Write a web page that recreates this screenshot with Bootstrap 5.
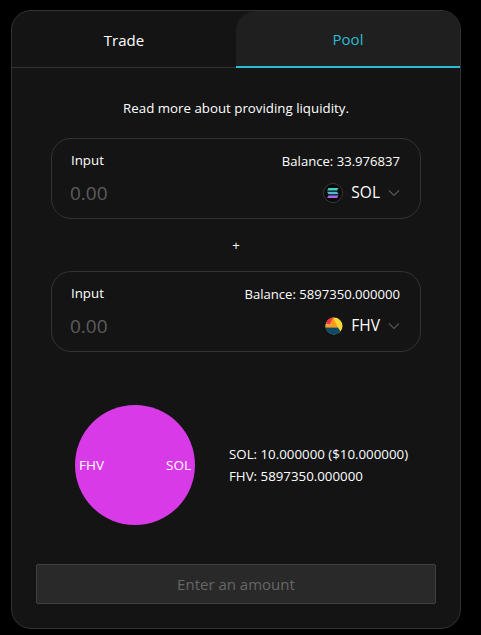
<!DOCTYPE html>
<html lang="en">
<head>
  <meta charset="UTF-8">
  <meta name="viewport" content="width=device-width, initial-scale=1.0">
  <title>Pool</title>
  <link href="https://cdn.jsdelivr.net/npm/bootstrap@5.3.3/dist/css/bootstrap.min.css" rel="stylesheet">
  <style>
    body {
      background: #000;
      color: #fff;
      font-family: "Open Sans", "Noto Sans", sans-serif;
      font-size: 13.3px;
      padding: 10px 20px 6px 11px;
    }

    .swap-panel {
      width: 450px;
      height: 619px;
      background: #141414;
      border: 1px solid #333;
      border-radius: 20px;
      overflow: hidden;
    }

    .tab-row {
      height: 57px;
      border-bottom: 1px solid #333;
    }

    .tab-item {
      width: 50%;
      font-size: 15px;
      padding-top: 2px;
    }

    .tab-active {
      background: #1f1f1f;
      color: #2cbcd4;
      border-radius: 20px 0 0 0;
      border-bottom: 2px solid #2cbcd4;
      margin-bottom: -1px;
    }

    .intro-line {
      padding-top: 31px;
      height: 70px;
    }

    .amount-box {
      width: 370px;
      height: 81px;
      margin-left: 39px;
      border: 1px solid #333;
      border-radius: 20px;
      padding: 12px 20px 0 19px;
    }

    .balance-text {
      font-size: 13.1px;
      line-height: 20px;
    }

    .amount-row {
      margin-top: 8px;
    }

    .amount-value {
      font-size: 19px;
      color: #5c5c5c;
      line-height: 28px;
      margin-left: -1px;
    }

    .token-name {
      font-size: 15.5px;
      margin: 0 8px;
    }

    .plus-line {
      height: 52px;
      padding-top: 1px;
    }

    .chart-row {
      padding: 53px 0 0 63px;
      gap: 34px;
    }

    .pie-disc {
      width: 120px;
      height: 120px;
      border-radius: 50%;
      background: #d93ae8;
      padding: 0 4px;
      font-size: 13.5px;
    }

    .legend-lines {
      line-height: 22px;
    }

    .submit-bar {
      width: 400px;
      height: 40px;
      margin: 39px 0 0 24px;
      background: #292929;
      border: 1px solid #404040;
      border-radius: 2px;
      color: #666;
      font-size: 15px;
    }
  </style>
</head>
<body>
  <div class="swap-panel">
    <div class="tab-row d-flex">
      <div class="tab-item d-flex align-items-center justify-content-center">Trade</div>
      <div class="tab-item tab-active d-flex align-items-center justify-content-center">Pool</div>
    </div>

    <div class="intro-line text-center">Read more about providing liquidity.</div>

    <div class="amount-box">
      <div class="d-flex justify-content-between">
        <span>Input</span>
        <span class="balance-text">Balance: 33.976837</span>
      </div>
      <div class="amount-row d-flex justify-content-between align-items-center">
        <span class="amount-value">0.00</span>
        <span class="d-flex align-items-center">
          <svg width="20" height="20" viewBox="0 0 20 20">
            <defs>
              <linearGradient id="solGrad" x1="0" y1="0" x2="0" y2="1">
                <stop offset="0" stop-color="#35d8c0"/>
                <stop offset="0.5" stop-color="#4fb8d0"/>
                <stop offset="1" stop-color="#c050f0"/>
              </linearGradient>
            </defs>
            <circle cx="10" cy="10" r="9.5" fill="#0a0a0a" stroke="#3a3a3a"/>
            <path d="M5.5 5h10l-1.4 2.4h-10zM4.1 8.8h10l1.4 2.4h-10zM5.5 12.6h10l-1.4 2.4h-10z" fill="url(#solGrad)"/>
          </svg>
          <span class="token-name">SOL</span>
          <svg width="12" height="12" viewBox="0 0 12 12"><path d="M1 3.5l5 5 5-5" fill="none" stroke="#555" stroke-width="1.2"/></svg>
        </span>
      </div>
    </div>

    <div class="plus-line d-flex align-items-center justify-content-center">+</div>

    <div class="amount-box">
      <div class="d-flex justify-content-between">
        <span>Input</span>
        <span class="balance-text">Balance: 5897350.000000</span>
      </div>
      <div class="amount-row d-flex justify-content-between align-items-center">
        <span class="amount-value">0.00</span>
        <span class="d-flex align-items-center">
          <svg width="20" height="20" viewBox="0 0 20 20">
            <circle cx="11" cy="10" r="8.5" fill="#fdd835"/>
            <path d="M11 1.5A8.5 8.5 0 0 0 2.8 8L7 8.5L10 3z" fill="#f0314f"/>
            <path d="M10 1.5L7 8.5L2.6 9L2.5 11.5L15 11.5z" fill="#fb9a1f"/>
            <path d="M2.6 11.5A8.5 8.5 0 0 0 17.5 15.5L15 11.5z" fill="#0f4a68"/>
          </svg>
          <span class="token-name">FHV</span>
          <svg width="12" height="12" viewBox="0 0 12 12"><path d="M1 3.5l5 5 5-5" fill="none" stroke="#555" stroke-width="1.2"/></svg>
        </span>
      </div>
    </div>

    <div class="chart-row d-flex align-items-center">
      <div class="pie-disc d-flex align-items-center justify-content-between">
        <span>FHV</span>
        <span>SOL</span>
      </div>
      <div class="legend-lines">
        <div>SOL: 10.000000 ($10.000000)</div>
        <div>FHV: 5897350.000000</div>
      </div>
    </div>

    <div class="submit-bar d-flex align-items-center justify-content-center">Enter an amount</div>
  </div>
  <script src="https://cdn.jsdelivr.net/npm/bootstrap@5.3.3/dist/js/bootstrap.bundle.min.js"></script>
</body>
</html>
